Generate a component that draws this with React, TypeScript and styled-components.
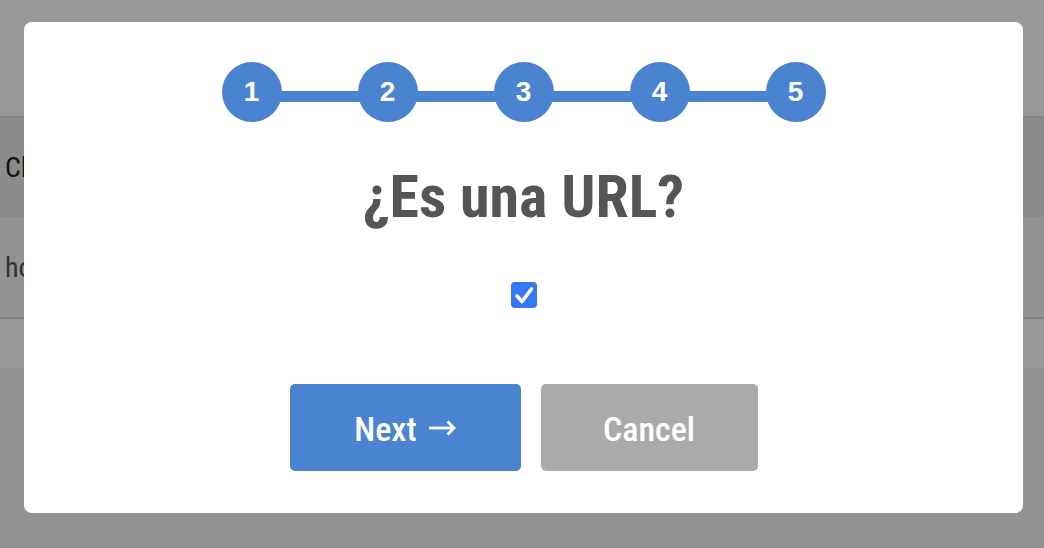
import styled, { createGlobalStyle } from "styled-components";

const condensed = `"Roboto Condensed", Roboto, "Liberation Sans", sans-serif`;

const GlobalStyle = createGlobalStyle`
  html, body {
    margin: 0;
    padding: 0;
    background: #f5f5f5;
    font-family: ${condensed};
  }
`;

const Page = styled.div`
  width: 1044px;
  height: 548px;
  overflow: hidden;
`;

const TopArea = styled.div`
  height: 116px;
  background: #ffffff;
`;

const Table = styled.div`
  border-top: 2px solid #dcdcdc;
  border-bottom: 2px solid #dcdcdc;
`;

const Row = styled.div<{ $bg: string; $height: number }>`
  display: flex;
  align-items: center;
  height: ${(p) => p.$height}px;
  padding-left: 5px;
  background: ${(p) => p.$bg};
  font-stretch: condensed;
`;

const HeadCell = styled.span`
  font-size: 28px;
  font-weight: 400;
  color: #222;
`;

const BodyCell = styled.span`
  font-size: 28px;
  color: #555;
`;

const FooterRow = styled.div`
  height: 49px;
  background: #ffffff;
`;

const Overlay = styled.div`
  position: fixed;
  inset: 0;
  background: rgba(0, 0, 0, 0.4);
`;

const Modal = styled.div`
  position: fixed;
  left: 24px;
  top: 22px;
  width: 999px;
  height: 491px;
  box-sizing: border-box;
  background: #ffffff;
  border-radius: 8px;
  display: flex;
  flex-direction: column;
  align-items: center;
  padding-top: 40px;
`;

const Stepper = styled.div`
  position: relative;
  display: flex;
  gap: 76px;
`;

const StepLine = styled.div`
  position: absolute;
  left: 30px;
  right: 30px;
  top: 29px;
  height: 11px;
  background: #4a84d0;
`;

const Step = styled.div`
  position: relative;
  width: 60px;
  height: 60px;
  border-radius: 50%;
  background: #4a84d0;
  color: #ffffff;
  display: flex;
  align-items: center;
  justify-content: center;
  font-family: "Liberation Sans", Arial, sans-serif;
  font-weight: 700;
  font-size: 28px;
`;

const Title = styled.h1`
  margin: 40px 0 0;
  font-family: ${condensed};
  font-stretch: condensed;
  font-weight: 700;
  font-size: 60px;
  line-height: 70px;
  color: #555555;
`;

const CheckBox = styled.label`
  margin-top: 50px;
  width: 26px;
  height: 26px;
  border-radius: 4px;
  background: #3478f6;
  display: block;
`;

const Buttons = styled.div`
  margin-top: 76px;
  display: flex;
  gap: 20px;
`;

const Button = styled.button<{ $primary?: boolean }>`
  width: ${(p) => (p.$primary ? 231 : 217)}px;
  height: 87px;
  padding: 2px 0 0;
  border: none;
  border-radius: 5px;
  background: ${(p) => (p.$primary ? "#4a84d0" : "#aaaaaa")};
  color: #ffffff;
  font-family: ${condensed};
  font-stretch: condensed;
  font-weight: 500;
  font-size: 34px;
  display: flex;
  align-items: center;
  justify-content: center;
  gap: 11px;
`;

const ArrowIcon = styled.svg`
  margin-top: -2px;
`;

export default function App() {
  return (
    <Page>
      <GlobalStyle />
      <TopArea />
      <Table>
        <Row $bg="#e9e9e9" $height={99}>
          <HeadCell>Clave</HeadCell>
        </Row>
        <Row $bg="#f5f5f5" $height={100}>
          <BodyCell>home</BodyCell>
        </Row>
      </Table>
      <FooterRow />
      <Overlay />
      <Modal>
        <Stepper>
          <StepLine />
          {[1, 2, 3, 4, 5].map((n) => (
            <Step key={n}>{n}</Step>
          ))}
        </Stepper>
        <Title>¿Es una URL?</Title>
        <CheckBox>
          <svg width="26" height="26" viewBox="0 0 26 26">
            <path
              d="M6 14 L11 19.5 L20.5 7"
              fill="none"
              stroke="#ffffff"
              strokeWidth="3.6"
              strokeLinecap="round"
              strokeLinejoin="round"
            />
          </svg>
        </CheckBox>
        <Buttons>
          <Button $primary>
            Next
            <ArrowIcon width="28" height="16" viewBox="0 0 28 16">
              <path d="M1 8 H25.5" stroke="#ffffff" strokeWidth="2.8" />
              <path
                d="M19.5 1.5 L26 8 L19.5 14.5"
                fill="none"
                stroke="#ffffff"
                strokeWidth="2.8"
              />
            </ArrowIcon>
          </Button>
          <Button>Cancel</Button>
        </Buttons>
      </Modal>
    </Page>
  );
}
